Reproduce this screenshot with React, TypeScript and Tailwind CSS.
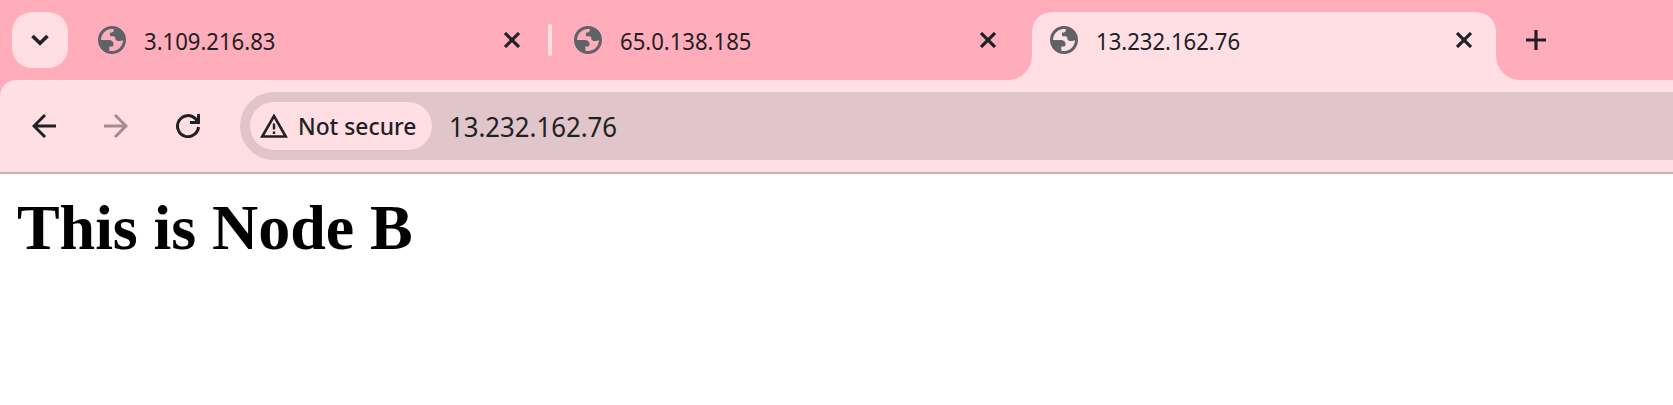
import React from "react";

const INK = "#202124";

function Globe() {
  return (
    <svg className="h-7 w-7 shrink-0" viewBox="0 0 28 28" fill="#5f6368" fillRule="evenodd">
      <path d="M14 0a14 14 0 1 0 0 28a14 14 0 0 0 0-28zM2.900 14A11.100 11.100 0 0 1 12.500 3.100H15.800V4C15.800 6 14.800 6.700 12 6.700V10.300H15.200C17 10.300 17.500 11.600 17.500 13.800C19 15.600 23 15.400 25 14A11.100 11.100 0 0 1 11.300 24.800V20.400H14C15.500 20.400 15.500 19 15.500 18C15.500 15.500 13.500 14 10.500 14z" />
    </svg>
  );
}

function Close() {
  return (
    <svg className="h-4 w-4 shrink-0" viewBox="0 0 16 16" fill="none" stroke={INK} strokeWidth="3.200">
      <path d="M1 1l14 14M15 1L1 15" />
    </svg>
  );
}

function TabContent({ title }: { title: string }) {
  return (
    <>
      <Globe />
      <span className="ml-[18px] mt-px flex-1 origin-left scale-x-[0.92] whitespace-nowrap text-[24px] leading-8">{title}</span>
      <Close />
    </>
  );
}

function Flare({ side }: { side: "left" | "right" }) {
  return (
    <svg className="h-6 w-6 shrink-0 self-end" viewBox="0 0 24 24" fill="#ffdee4">
      <path d={side === "left" ? "M24 0V24H0A24 24 0 0 0 24 0z" : "M0 0V24H24A24 24 0 0 1 0 0z"} />
    </svg>
  );
}

export default function App() {
  return (
    <div className="flex h-[405px] w-[1673px] flex-col overflow-hidden bg-white font-['Noto_Sans',sans-serif] text-[#202124]">
      <header className="flex h-20 shrink-0 bg-[#ffadbb]">
        <button className="ml-3 mt-3 flex h-14 w-14 shrink-0 items-center justify-center rounded-[20px] bg-[#ffdee4]">
          <svg className="h-5 w-5" viewBox="0 0 20 20" fill="none" stroke={INK} strokeWidth="3.600">
            <path d="M2.500 6L10 13.200L17.500 6" />
          </svg>
        </button>
        <div className="ml-[30px] flex h-20 w-[422px] shrink-0 items-center">
          <TabContent title="3.109.216.83" />
        </div>
        <div className="ml-7 mt-6 h-8 w-1 shrink-0 rounded-sm bg-[#ffdee4]" />
        <div className="ml-[22px] flex h-20 w-[422px] shrink-0 items-center">
          <TabContent title="65.0.138.185" />
        </div>
        <div className="ml-3 flex shrink-0">
          <Flare side="left" />
          <div className="mt-3 flex h-[68px] w-[464px] items-center rounded-t-[20px] bg-[#ffdee4] pb-3 pl-[18px] pr-6">
            <TabContent title="13.232.162.76" />
          </div>
          <Flare side="right" />
        </div>
        <svg className="ml-[6px] mt-[30px] h-5 w-5 shrink-0" viewBox="0 0 20 20" fill="none" stroke={INK} strokeWidth="3.200">
          <path d="M10 0V20M0 10H20" />
        </svg>
      </header>

      <div className="shrink-0 bg-[#ffadbb]">
        <nav className="flex h-[94px] rounded-tl-[16px] border-b-2 border-[#c9b0b6] bg-[#ffdee4] pt-3">
          <div className="flex h-[68px] w-60 shrink-0 items-center pl-8">
            <svg className="h-6 w-6" viewBox="0 0 24 24" fill="none" stroke={INK} strokeWidth="2.900">
              <path d="M24 12H2M13 1L2 12L13 23" />
            </svg>
            <svg className="ml-12 h-6 w-6" viewBox="0 0 24 24" fill="none" stroke="#a18c92" strokeWidth="2.900">
              <path d="M0 12H22M11 1L22 12L11 23" />
            </svg>
            <svg className="ml-12 h-6 w-6" viewBox="0 0 24 24" fill="none" stroke={INK} strokeWidth="3">
              <path d="M22.500 13A10.500 10.500 0 1 1 19.500 4.700L22.500 8.500" />
              <path d="M22.500 0V8.500H14" />
              <path d="M22.500 3.500V8.500H17.500z" fill={INK} stroke="none" />
            </svg>
          </div>
          <div className="flex h-[68px] flex-1 items-center rounded-l-full bg-[#e0c5ca] pl-[10px]">
            <div className="flex h-12 w-[182px] shrink-0 items-center rounded-full bg-[#ffdee4] pl-[10px]">
              <svg className="h-6 w-7 shrink-0" viewBox="0 0 28 24">
                <path d="M2.200 22.500H25.800L14 2z" fill="none" stroke={INK} strokeWidth="2.600" />
                <path d="M12.800 9.500h2.400v6h-2.400zM12.800 17.500h2.400v2.500h-2.400z" fill={INK} />
              </svg>
              <span className="ml-[10px] origin-left scale-x-[0.95] whitespace-nowrap text-[24px] font-medium leading-8">Not secure</span>
            </div>
            <span className="ml-[17px] origin-left scale-x-[0.92] whitespace-nowrap text-[28px] leading-9">13.232.162.76</span>
          </div>
        </nav>
      </div>

      <main className="px-[17px] pt-[17px]">
        <h1 className="font-['Liberation_Serif',serif] text-[64px] font-bold leading-[74px] tracking-[-0.07px] text-black">This is Node B</h1>
      </main>
    </div>
  );
}
